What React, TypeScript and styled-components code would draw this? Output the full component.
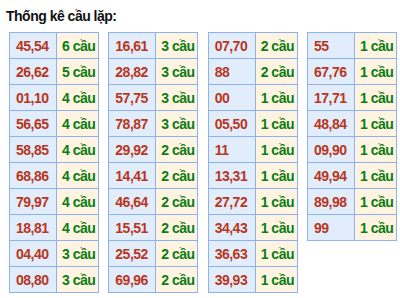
import React from "react";
import styled, {createGlobalStyle} from "styled-components";

type Pair = [string, number];

const columns: Pair[][] = [
  [["45,54", 6], ["26,62", 5], ["01,10", 4], ["56,65", 4], ["58,85", 4], ["68,86", 4], ["79,97", 4], ["18,81", 4], ["04,40", 3], ["08,80", 3]],
  [["16,61", 3], ["28,82", 3], ["57,75", 3], ["78,87", 3], ["29,92", 2], ["14,41", 2], ["46,64", 2], ["15,51", 2], ["25,52", 2], ["69,96", 2]],
  [["07,70", 2], ["88", 2], ["00", 1], ["05,50", 1], ["11", 1], ["13,31", 1], ["27,72", 1], ["34,43", 1], ["36,63", 1], ["39,93", 1]],
  [["55", 1], ["67,76", 1], ["17,71", 1], ["48,84", 1], ["09,90", 1], ["49,94", 1], ["89,98", 1], ["99", 1]],
];

const App = (): JSX.Element => {
  return (
    <>
      <GlobalStyle />
      <Container>
        <Title>Thống kê cầu lặp:</Title>
        <Tables>
          {columns.map((rows, i) => (
            <Table key={i}>
              <tbody>
                {rows.map(([pair, count]) => (
                  <tr key={pair}>
                    <PairCell>{pair}</PairCell>
                    <CountCell>{count} cầu</CountCell>
                  </tr>
                ))}
              </tbody>
            </Table>
          ))}
        </Tables>
      </Container>
    </>
  );
};

const GlobalStyle = createGlobalStyle`
  body {
    margin: 0;
    background: #ffffff;
    font-family: "Liberation Sans", Arial, sans-serif;
  }
`;

const Container = styled.div`
  width: 400px;
  display: flex;
  flex-direction: column;
`;

const Title = styled.h2`
  margin: 0;
  padding: 8px 0 0 6px;
  font-size: 14px;
  line-height: 16px;
  letter-spacing: -0.5px;
  font-weight: bold;
  color: #111111;
`;

const Tables = styled.div`
  display: flex;
  align-items: flex-start;
  gap: 9.33px;
  padding: 8px 0 0 9px;
`;

const Table = styled.table`
  width: 90px;
  border-collapse: collapse;
  table-layout: fixed;
  border: 1px solid #8db2f3;
`;

const Cell = styled.td`
  height: 26px;
  padding: 0;
  border: 1px solid #8db2f3;
  font-size: 14px;
  letter-spacing: -0.5px;
  font-weight: bold;
  white-space: nowrap;
  vertical-align: middle;
  box-sizing: border-box;
`;

const PairCell = styled(Cell)`
  width: 47px;
  padding-left: 6px;
  background: #e2edfc;
  color: #b8361d;
`;

const CountCell = styled(Cell)`
  padding-left: 5px;
  background: #fef4e1;
  color: #0a7d12;
`;

export default App;
